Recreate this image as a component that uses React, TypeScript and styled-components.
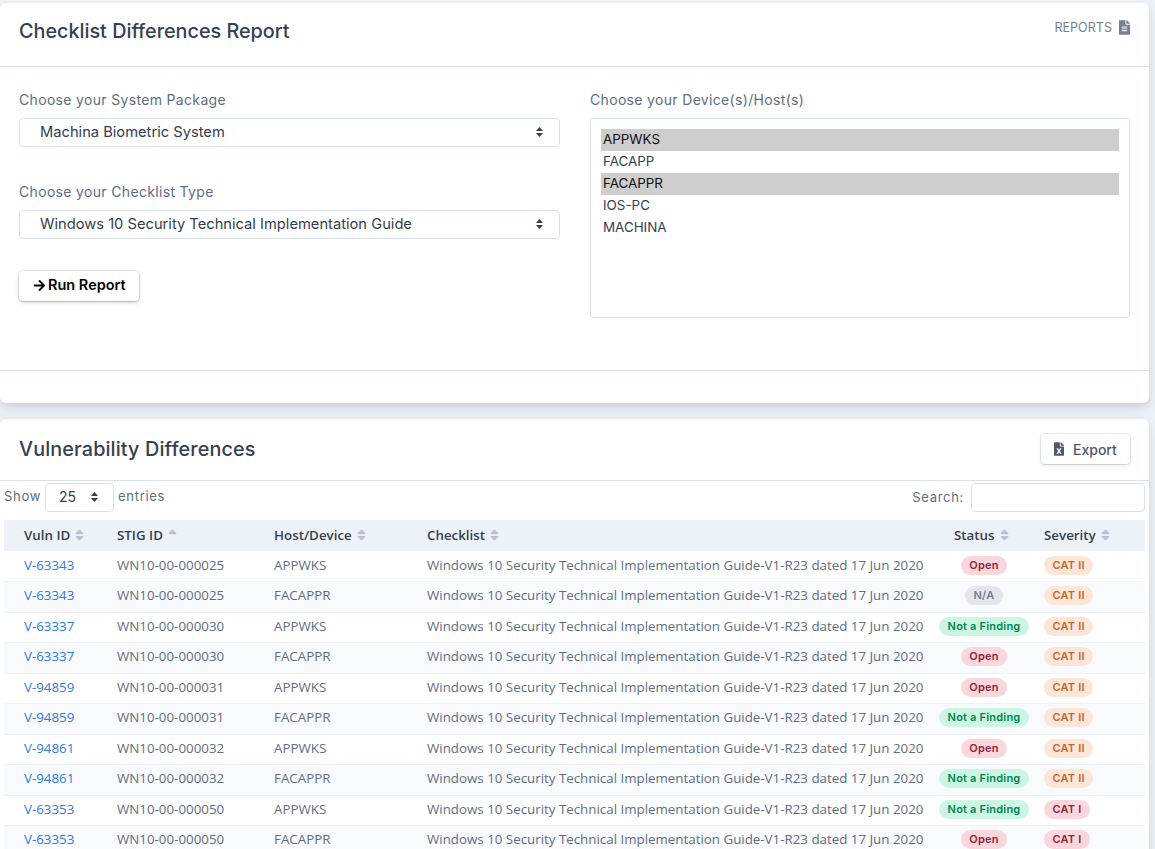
import React, { FC } from "react"
import styled, { createGlobalStyle } from "styled-components"
import { FaArrowRight, FaFileAlt, FaFileExcel, FaSort, FaSortUp } from "react-icons/fa"

const headFont = `Inter, "Liberation Sans", sans-serif`
const bodyFont = `"Open Sans", "Liberation Sans", sans-serif`

const Global = createGlobalStyle`
  html, body {
    margin: 0;
    height: 849px;
    overflow: hidden;
    background: #edf2f9;
  }
`

const Page = styled.div`
  display: flex;
  flex-direction: column;
  gap: 16px;
  padding: 3px 6px 0 0;
  font-family: ${headFont};
  color: #5e6e82;
`

const Card = styled.section`
  background: #fff;
  border-radius: 6px;
  box-shadow: 0 7px 14px rgba(65, 69, 88, 0.1), 0 3px 6px rgba(0, 0, 0, 0.07);
`

const CardHeader = styled.header<{ $height: number }>`
  display: flex;
  justify-content: space-between;
  height: ${({ $height }) => $height}px;
  box-sizing: border-box;
  padding: 15px 19px 0 19px;
  border-bottom: 1px solid #d8e2ef;
`

const Title = styled.h2<{ $offset?: number }>`
  margin: ${({ $offset }) => $offset ?? 0}px 0 0;
  font-size: 19.8px;
  letter-spacing: ${({ $offset }) => ($offset ? 0.13 : 0)}px;
  line-height: 26px;
  font-weight: 500;
  color: #344050;
`

const ReportsLink = styled.a`
  display: flex;
  align-items: center;
  gap: 7px;
  height: 18px;
  font-size: 12.5px;
  letter-spacing: 0.05px;
  color: #748194;
  svg {
    width: 11px;
    height: 15px;
  }
`

const FormGrid = styled.div`
  display: grid;
  grid-template-columns: 541px 540px;
  column-gap: 30px;
  padding: 24px 19px 0;
  height: 304px;
  box-sizing: border-box;
  border-bottom: 1px solid #d8e2ef;
`

const Field = styled.div`
  display: flex;
  flex-direction: column;
`

const Label = styled.label`
  font-size: 14px;
  letter-spacing: 0.33px;
  line-height: 18px;
  color: #5e6e82;
  margin-bottom: 9px;
`

const SelectWrap = styled.div`
  position: relative;
  margin-bottom: 36px;
`

const Select = styled.select`
  appearance: none;
  display: block;
  width: 100%;
  height: 29px;
  padding: 0 30px 2px 20px;
  box-sizing: border-box;
  background: #fff;
  border: 1px solid #d8e2ef;
  border-radius: 4px;
  font-family: ${headFont};
  font-size: 14.7px;
  color: #344050;
`

const Caret = styled.svg`
  position: absolute;
  right: 17px;
  top: 9px;
  width: 7px;
  height: 10px;
  fill: #344050;
  pointer-events: none;
`

const ListBox = styled.select`
  display: block;
  width: 100%;
  height: 200px;
  padding: 10px;
  box-sizing: border-box;
  border: 1px solid #d8e2ef;
  border-radius: 4px;
  overflow: hidden;
  font-family: ${headFont};
  font-size: 13.4px;
  color: #344050;
  option {
    height: 22px;
    line-height: 20px;
    padding: 2px 2px 0;
    box-sizing: border-box;
  }
`

const RunButton = styled.button`
  display: inline-flex;
  align-items: center;
  gap: 2px;
  width: 120px;
  height: 30px;
  margin-top: -4px;
  padding: 0 0 3px 14px;
  background: #fff;
  border: 0;
  border-radius: 4px;
  box-shadow: 0 0 0 1px rgba(43, 45, 80, 0.1), 0 2px 5px rgba(43, 45, 80, 0.12), 0 1px 2px rgba(0, 0, 0, 0.15);
  font-family: ${headFont};
  font-size: 14.5px;
  font-weight: 600;
  color: #000;
  svg {
    width: 13px;
    height: 13px;
    margin-top: 2px;
  }
`

const Spacer = styled.div`
  height: 32px;
`

const ExportButton = styled.button`
  display: inline-flex;
  align-items: center;
  gap: 9px;
  width: 89px;
  height: 30px;
  padding: 0 0 0 13px;
  background: #fff;
  border: 0;
  border-radius: 4px;
  box-shadow: 0 0 0 1px rgba(43, 45, 80, 0.1), 0 2px 5px rgba(43, 45, 80, 0.08), 0 1px 1.5px rgba(0, 0, 0, 0.07);
  font-family: ${headFont};
  font-size: 14px;
  font-weight: 500;
  color: #4d5969;
  svg {
    width: 10px;
    height: 14px;
  }
`

const Controls = styled.div`
  display: flex;
  justify-content: space-between;
  align-items: flex-start;
  height: 39px;
  box-sizing: border-box;
  padding: 2px 4px 0;
  font-size: 13px;
  letter-spacing: 0.7px;
  color: #5e6e82;
`

const ControlGroup = styled.div`
  display: flex;
  align-items: center;
  gap: 4px;
`

const ControlText = styled.span<{ $lift: number }>`
  padding-bottom: ${({ $lift }) => $lift}px;
`

const LengthWrap = styled.div`
  position: relative;
  width: 69px;
`

const LengthSelect = styled(Select)`
  padding-left: 13px;
  font-size: 14px;
`

const LengthCaret = styled(Caret)`
  right: 16px;
`

const SearchBox = styled.input`
  width: 174px;
  height: 29px;
  margin-left: 3px;
  box-sizing: border-box;
  border: 1px solid #d8e2ef;
  border-radius: 4px;
  background: #fff;
`

const TableWrap = styled.div`
  padding: 0 4px;
`

const Table = styled.table`
  width: 1141px;
  table-layout: fixed;
  border-collapse: collapse;
  font-family: ${bodyFont};
  font-size: 13.33px;
`

const HeadRow = styled.tr`
  height: 31px;
  background: #edf2f9;
`

const Th = styled.th<{ $width?: number; $pad?: number }>`
  ${({ $width }) => ($width ? `width: ${$width}px;` : "")}
  box-sizing: border-box;
  padding: 0 0 2px ${({ $pad }) => $pad ?? 20}px;
  text-align: left;
  font-weight: 600;
  font-size: 13.33px;
  color: #344050;
  white-space: nowrap;
  svg {
    width: 9px;
    height: 14px;
    margin-left: 5px;
    vertical-align: -2px;
    color: #b6c1d2;
  }
`

const Row = styled.tr`
  height: 30.5px;
  border-bottom: 1px solid #edf2f9;
  &:nth-child(even) {
    background: #f9fafd;
  }
`

const Td = styled.td<{ $center?: boolean; $pad?: number }>`
  padding: 0 0 2.8px ${({ $pad }) => $pad ?? 20}px;
  text-align: ${({ $center }) => ($center ? "center" : "left")};
  color: #5e6e82;
  white-space: nowrap;
`

const VulnLink = styled.a`
  color: #2c7be5;
  text-decoration: none;
`

type Tone = "danger" | "warning" | "success" | "muted"

const tones: Record<Tone, { bg: string; fg: string }> = {
  danger: { bg: "#fad7dd", fg: "#932338" },
  warning: { bg: "#fde6d8", fg: "#c46632" },
  success: { bg: "#ccf6e4", fg: "#00864e" },
  muted: { bg: "#e3e6ea", fg: "#748194" },
}

const Pill = styled.span<{ $tone: Tone }>`
  display: inline-block;
  padding: 0 8.5px;
  height: 19px;
  line-height: 19px;
  border-radius: 10px;
  font-family: ${headFont};
  font-size: 11px;
  letter-spacing: 0.2px;
  font-weight: 600;
  background: ${({ $tone }) => tones[$tone].bg};
  color: ${({ $tone }) => tones[$tone].fg};
`

const statusTone: Record<string, Tone> = {
  Open: "danger",
  "N/A": "muted",
  "Not a Finding": "success",
}

const checklist = "Windows 10 Security Technical Implementation Guide-V1-R23 dated 17 Jun 2020"

const rows = [
  ["V-63343", "WN10-00-000025", "APPWKS", "Open", "CAT II"],
  ["V-63343", "WN10-00-000025", "FACAPPR", "N/A", "CAT II"],
  ["V-63337", "WN10-00-000030", "APPWKS", "Not a Finding", "CAT II"],
  ["V-63337", "WN10-00-000030", "FACAPPR", "Open", "CAT II"],
  ["V-94859", "WN10-00-000031", "APPWKS", "Open", "CAT II"],
  ["V-94859", "WN10-00-000031", "FACAPPR", "Not a Finding", "CAT II"],
  ["V-94861", "WN10-00-000032", "APPWKS", "Open", "CAT II"],
  ["V-94861", "WN10-00-000032", "FACAPPR", "Not a Finding", "CAT II"],
  ["V-63353", "WN10-00-000050", "APPWKS", "Not a Finding", "CAT I"],
  ["V-63353", "WN10-00-000050", "FACAPPR", "Open", "CAT I"],
]

const hosts = ["APPWKS", "FACAPP", "FACAPPR", "IOS-PC", "MACHINA"]

const caretPath = "M3.5 0 L7 4 H0 Z M3.5 10 L0 6 H7 Z"

const Choice: FC<{ label: string; value: string }> = ({ label, value }) => (
  <Field>
    <Label>{label}</Label>
    <SelectWrap>
      <Select defaultValue={value}>
        <option>{value}</option>
      </Select>
      <Caret viewBox="0 0 7 10">
        <path d={caretPath} />
      </Caret>
    </SelectWrap>
  </Field>
)

const App: FC = () => (
  <Page>
    <Global />
    <Card>
      <CardHeader $height={64}>
        <Title>Checklist Differences Report</Title>
        <ReportsLink>
          REPORTS <FaFileAlt />
        </ReportsLink>
      </CardHeader>
      <FormGrid>
        <div>
          <Choice label="Choose your System Package" value="Machina Biometric System" />
          <Choice label="Choose your Checklist Type" value="Windows 10 Security Technical Implementation Guide" />
          <RunButton>
            <FaArrowRight /> Run Report
          </RunButton>
        </div>
        <Field>
          <Label>Choose your Device(s)/Host(s)</Label>
          <ListBox multiple defaultValue={["APPWKS", "FACAPPR"]}>
            {hosts.map(h => (
              <option key={h} value={h}>
                {h}
              </option>
            ))}
          </ListBox>
        </Field>
      </FormGrid>
      <Spacer />
    </Card>
    <Card>
      <CardHeader $height={62}>
        <Title $offset={2}>Vulnerability Differences</Title>
        <ExportButton>
          <FaFileExcel /> Export
        </ExportButton>
      </CardHeader>
      <Controls>
        <ControlGroup>
          <ControlText $lift={4}>Show</ControlText>
          <LengthWrap>
            <LengthSelect defaultValue="25">
              <option>25</option>
            </LengthSelect>
            <LengthCaret viewBox="0 0 7 10">
              <path d={caretPath} />
            </LengthCaret>
          </LengthWrap>
          <ControlText $lift={4}>entries</ControlText>
        </ControlGroup>
        <ControlGroup>
          <ControlText $lift={2}>Search:</ControlText>
          <SearchBox />
        </ControlGroup>
      </Controls>
      <TableWrap>
        <Table>
          <thead>
            <HeadRow>
              <Th $width={93}>Vuln ID<FaSort /></Th>
              <Th $width={157}>STIG ID<FaSortUp /></Th>
              <Th $width={153}>Host/Device<FaSort /></Th>
              <Th $width={527}>Checklist<FaSort /></Th>
              <Th $width={100}>Status<FaSort /></Th>
              <Th $pad={10}>Severity<FaSort /></Th>
            </HeadRow>
          </thead>
          <tbody>
            {rows.map(([vuln, stig, host, status, severity]) => (
              <Row key={vuln + host}>
                <Td><VulnLink>{vuln}</VulnLink></Td>
                <Td>{stig}</Td>
                <Td>{host}</Td>
                <Td>{checklist}</Td>
                <Td $center $pad={0}><Pill $tone={statusTone[status]}>{status}</Pill></Td>
                <Td $pad={10}><Pill $tone={severity === "CAT I" ? "danger" : "warning"}>{severity}</Pill></Td>
              </Row>
            ))}
          </tbody>
        </Table>
      </TableWrap>
    </Card>
  </Page>
)

export default App
